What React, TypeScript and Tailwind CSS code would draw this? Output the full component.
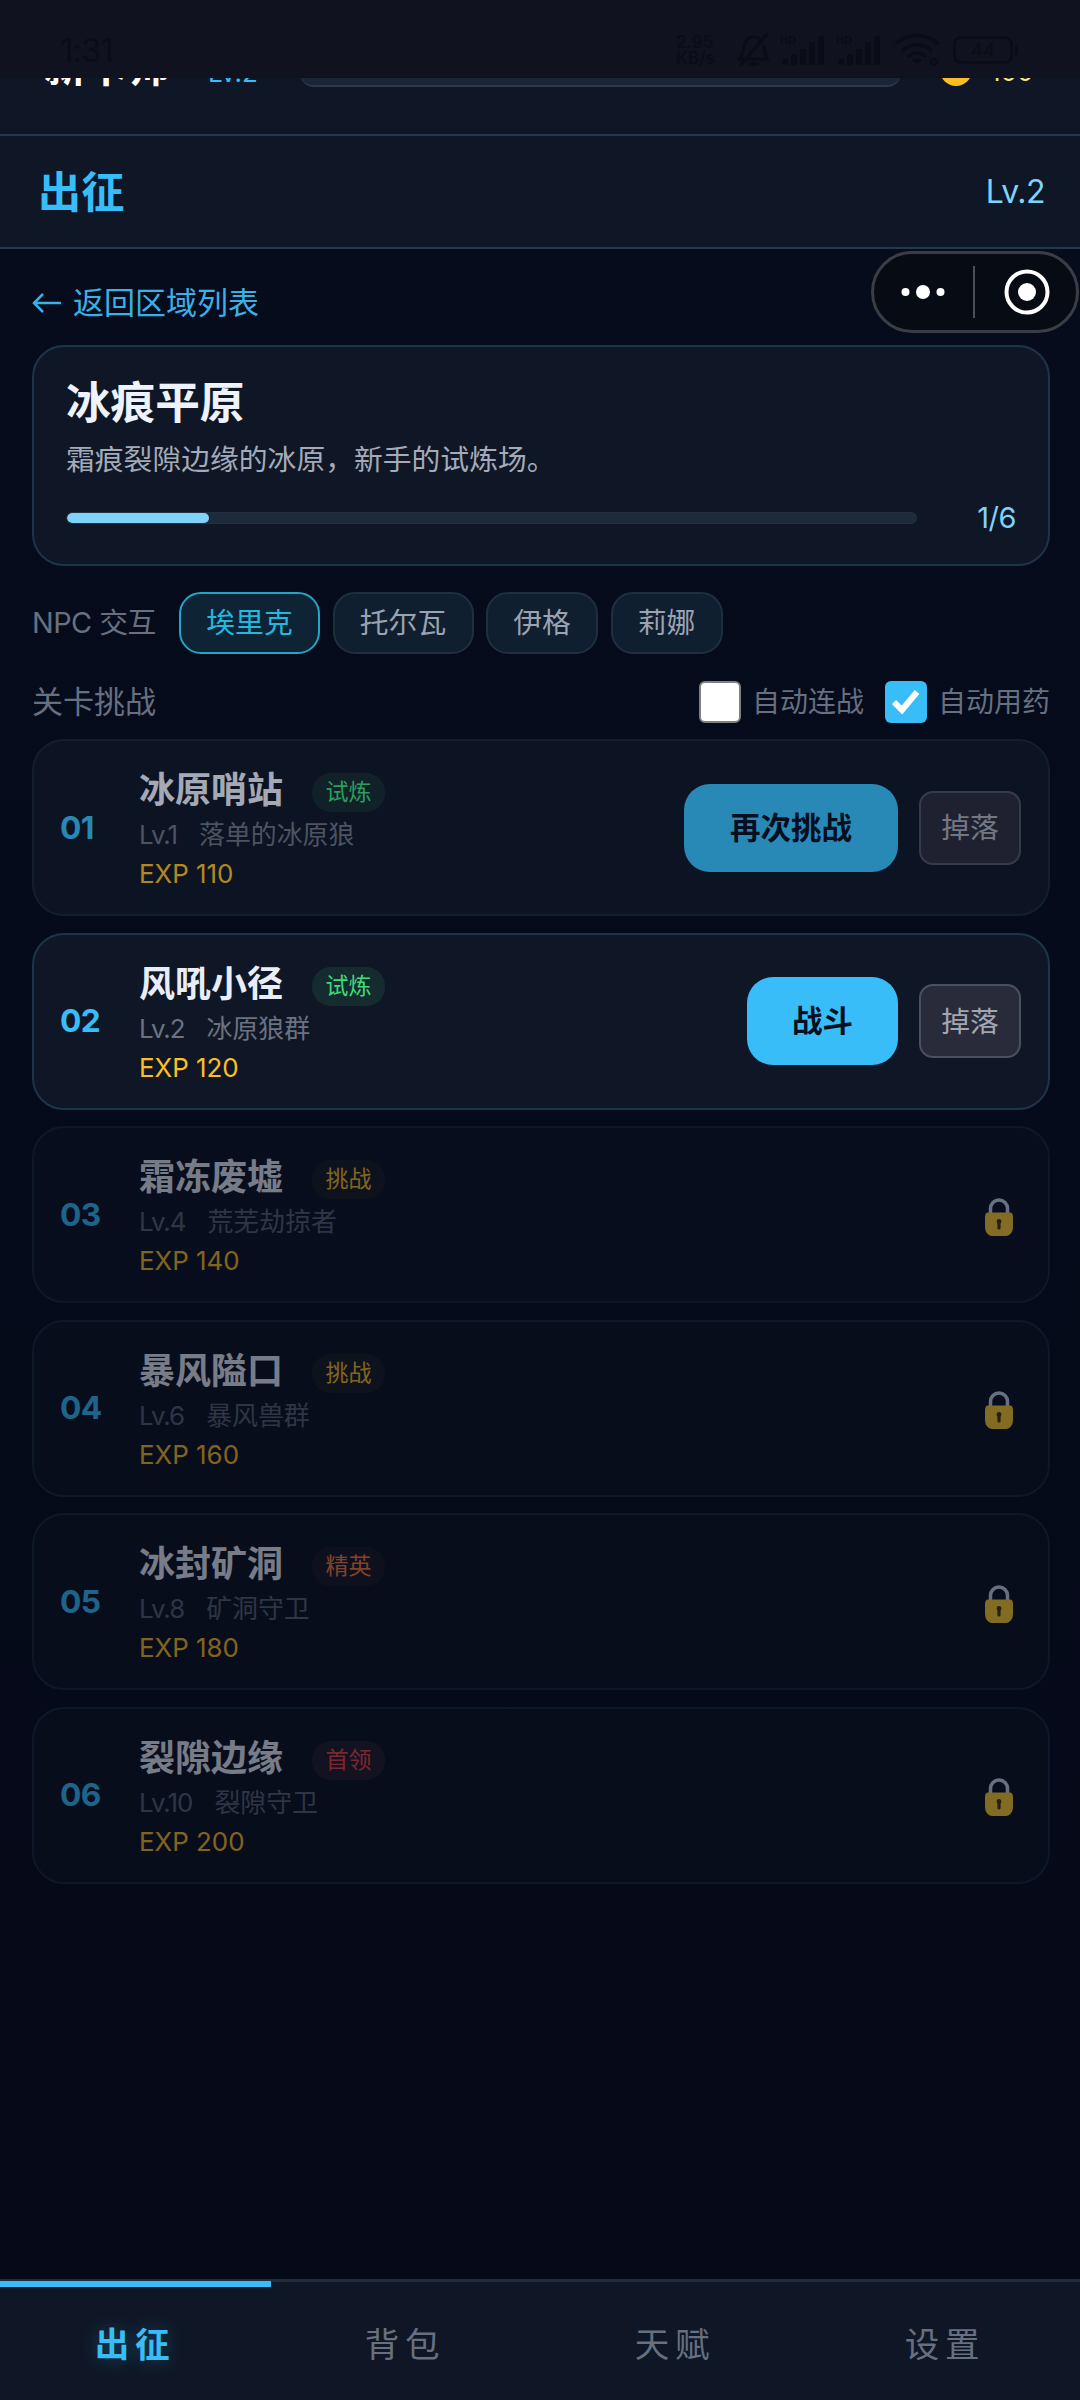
import React from "react";

function Signal() {
  return (
    <div className="relative w-[48px] h-[32px]">
      <span className="absolute left-0 top-0 text-[11px] leading-[12px] font-bold text-[#0a0c17]">HD</span>
      <svg width="48" height="32" viewBox="0 0 48 32" className="block">
        <rect x="2" y="25" width="6" height="6" rx="1" fill="#0a0c17" />
        <rect x="11" y="20" width="6" height="11" rx="1" fill="#0a0c17" />
        <rect x="20" y="15" width="6" height="16" rx="1" fill="#0a0c17" />
        <rect x="29" y="8" width="6" height="23" rx="1" fill="#0a0c17" />
        <rect x="38" y="2" width="6" height="29" rx="1" fill="#0a0c17" />
      </svg>
    </div>
  );
}

function StatusBar() {
  return (
    <div className="relative z-10 h-[78px] shrink-0 bg-[#10121f] flex items-center pt-[22px] pl-[60px] pr-[62px] justify-between text-[#0a0c17]">
      <span className="text-[33px] leading-[40px] tracking-[-1px]">1:31</span>
      <div className="flex items-center">
        <div className="w-[52px] text-[17px] leading-[16px] font-semibold">
          <div>2.95</div>
          <div>KB/s</div>
        </div>
        <svg width="34" height="36" viewBox="0 0 34 36" className="ml-[8px]" fill="none" stroke="#0a0c17" strokeWidth="3" strokeLinecap="round" strokeLinejoin="round">
          <path d="M3 27c4-3 4-7 5-13 1-6 5-9 10-9 4 0 7 2 8 5" />
          <path d="M28 14c0 6 1 10 4 13H3" />
          <path d="M14 32h7" strokeWidth="4" />
          <path d="M5 33 31 2" />
        </svg>
        <div className="ml-[10px]"><Signal /></div>
        <div className="ml-[8px]"><Signal /></div>
        <svg width="44" height="34" viewBox="0 0 44 34" className="ml-[11px]" fill="none" stroke="#0a0c17" strokeWidth="3.5" strokeLinecap="round">
          <path d="M2 10C13 0 31 0 42 10" />
          <path d="M8 17c8-7 20-7 28 0" />
          <path d="M14 23c5-4 11-4 16 0" />
          <path d="M22 31l-5-4c3-2 7-2 10 0z" fill="#0a0c17" stroke="none" />
          <circle cx="39" cy="29" r="3" strokeWidth="2.5" />
        </svg>
        <div className="ml-[14px] w-[60px] h-[28px] rounded-[8px] border-[3px] border-[#0a0c17] flex items-center justify-center text-[19px] leading-none">44</div>
        <div className="ml-[2px] w-[3px] h-[10px] rounded-r-[2px] bg-[#0a0c17]" />
      </div>
    </div>
  );
}

function ClippedHeader() {
  return (
    <div className="h-[56px] shrink-0 overflow-hidden bg-[#0f1726]">
      <div className="-mt-[50px] h-[56px] flex items-end pl-[44px] pr-[44px]">
        <span className="w-[126px] shrink-0 text-[42px] leading-[56px] font-bold text-white -mb-[11px]">新卡师</span>
        <span className="w-[56px] shrink-0 ml-[38px] text-[26px] leading-[32px] text-[#38bdf8] -mb-[5px]">Lv.2</span>
        <div className="ml-[36px] w-[601px] h-[30px] shrink-0 rounded-b-[14px] bg-[#1a2535] border-b-2 border-[#2a3a4c] -mb-[3px]" />
        <div className="ml-[39px] w-[32px] h-[32px] shrink-0 rounded-full bg-[#fbbf24] -mb-[2px]" />
        <span className="ml-[18px] text-[26px] leading-[32px] text-[#fde68a] -mb-[4px]">100</span>
      </div>
    </div>
  );
}

function Lock() {
  return (
    <svg width="32" height="40" viewBox="0 0 32 40" className="block">
      <path d="M7.5 18V11.5a8.5 8.5 0 0 1 17 0V18" fill="none" stroke="#c4d8ea" strokeWidth="3.5" />
      <path d="M5 15.5h22c2 0 3 1.5 3 5v9c0 6-3 9-7 9.500H9c-4-.5-7-3.500-7-9.500v-9c0-3.500 1-5 3-5z" fill="#ffcc2e" />
      <rect x="14.4" y="23" width="3.2" height="9.500" rx="1.6" fill="#4a3606" />
      <circle cx="16" cy="24.500" r="2.400" fill="#4a3606" />
    </svg>
  );
}

type Stage = {
  no: string;
  name: string;
  tag: string;
  tagClass: string;
  lv: string;
  foe: string;
  exp: string;
  state: "done" | "open" | "locked";
};

const stages: Stage[] = [
  { no: "01", name: "冰原哨站", tag: "试炼", tagClass: "text-[#3ddc78] bg-[#4ade80]/10", lv: "Lv.1", foe: "落单的冰原狼", exp: "EXP 110", state: "done" },
  { no: "02", name: "风吼小径", tag: "试炼", tagClass: "text-[#3ddc78] bg-[#4ade80]/10", lv: "Lv.2", foe: "冰原狼群", exp: "EXP 120", state: "open" },
  { no: "03", name: "霜冻废墟", tag: "挑战", tagClass: "text-[#fbbf24] bg-[#fbbf24]/5", lv: "Lv.4", foe: "荒芜劫掠者", exp: "EXP 140", state: "locked" },
  { no: "04", name: "暴风隘口", tag: "挑战", tagClass: "text-[#fbbf24] bg-[#fbbf24]/5", lv: "Lv.6", foe: "暴风兽群", exp: "EXP 160", state: "locked" },
  { no: "05", name: "冰封矿洞", tag: "精英", tagClass: "text-[#fb7a3c] bg-[#f87171]/5", lv: "Lv.8", foe: "矿洞守卫", exp: "EXP 180", state: "locked" },
  { no: "06", name: "裂隙边缘", tag: "首领", tagClass: "text-[#ef4444] bg-[#f87171]/10", lv: "Lv.10", foe: "裂隙守卫", exp: "EXP 200", state: "locked" },
];

function StageCard({ s }: { s: Stage }) {
  const locked = s.state === "locked";
  const op = s.state === "done" ? "opacity-70" : locked ? "opacity-50" : "";
  const border = locked ? "border-[#15263a]" : s.state === "done" ? "border-[#172838]" : "border-[#1c3548]";
  const bg = locked ? "bg-[#0b1120]" : "bg-[#0f1726]";
  return (
    <div className={`h-[177px] rounded-[32px] border-2 ${border} ${bg} flex items-center pl-[26px] pr-[27px] ${op}`}>
      <div className="w-[79px] shrink-0 text-[31.68px] leading-[40px] tracking-[-0.5px] font-bold text-[#38bdf8]">{s.no}</div>
      <div className="flex-1 min-w-0 flex flex-col pt-[6px]">
        <div className="flex items-center h-[40px]">
          <span className="text-[36px] leading-[40px] font-bold text-[#e8edf7]">{s.name}</span>
          <span className={`mt-[5px] ml-[29px] w-[73px] h-[39px] rounded-[19px] flex items-center justify-center text-[23px] leading-none ${s.tagClass}`}>{s.tag}</span>
        </div>
        <div className={`mt-[8px] flex items-center h-[34px] text-[25.9px] leading-[34px] ${locked ? "text-[#596070]" : "text-[#6b7280]"}`}>
          <span className="tracking-[-1px]">{s.lv}</span>
          <span className="ml-[22px]">{s.foe}</span>
        </div>
        <div className="mt-[5px] h-[34px] text-[25.9px] leading-[34px] text-[#fbbf24]">{s.exp}</div>
      </div>
      {locked ? (
        <div className="w-[32px] mr-[6px] mt-[4px] shrink-0"><Lock /></div>
      ) : (
        <div className="flex items-center shrink-0 gap-[21px]">
          <div className={`h-[88px] rounded-[26px] bg-[#38bdf8] flex items-center justify-center text-[30.5px] font-bold text-[#061021] ${s.state === "done" ? "w-[214px]" : "w-[151px]"}`}>
            {s.state === "done" ? "再次挑战" : "战斗"}
          </div>
          <div className="w-[102px] h-[74px] rounded-[14px] border-2 border-[#4b4f5e] bg-[#2a2b3a] flex items-center justify-center text-[28.8px] text-[#a2a6b0]">掉落</div>
        </div>
      )}
    </div>
  );
}

function Chip({ label, active, w }: { label: string; active?: boolean; w: string }) {
  return (
    <div className={`${w} h-[62px] rounded-[22px] border-2 flex items-center justify-center text-[28.8px] ${active ? "border-[#22a5c9] bg-[#0e2435] text-[#22b8e0]" : "border-[#1e3040] bg-[#0f1f2f] text-[#9aa3b2]"}`}>
      {label}
    </div>
  );
}

function Check({ on }: { on?: boolean }) {
  return on ? (
    <div className="w-[42px] h-[42px] rounded-[6px] bg-[#38bdf8] flex items-center justify-center">
      <svg width="32" height="32" viewBox="0 0 32 32" fill="none" stroke="#fff" strokeWidth="6">
        <path d="M4 16l8 8L27 6" />
      </svg>
    </div>
  ) : (
    <div className="w-[42px] h-[42px] rounded-[6px] bg-white border-2 border-[#808080]" />
  );
}

export default function App() {
  return (
    <div
      className="relative w-[1080px] h-[2400px] overflow-hidden flex flex-col bg-[#050a18]"
      style={{ fontFamily: '"Inter","Noto Sans CJK SC",sans-serif' }}
    >
      <StatusBar />
      <ClippedHeader />
      <div className="h-[115px] shrink-0 border-y-2 border-[#1e3a4c] bg-[#0f1726] flex items-center justify-between pl-[38px] pr-[35px]">
        <span className="text-[43.2px] leading-[50px] font-bold text-[#38bdf8]">出征</span>
        <span className="text-[32px] leading-[40px] tracking-[-0.5px] text-[#7dd3fc]">Lv.2</span>
      </div>

      <div className="absolute left-[871px] top-[251px] w-[208px] h-[82px] rounded-[41px] border-[3px] border-[#3a3d46] bg-[#070b14] flex items-center">
        <svg width="44" height="16" viewBox="0 0 44 16" className="ml-[27px]" fill="#fff">
          <circle cx="4.500" cy="8" r="4" />
          <circle cx="22" cy="8" r="7" />
          <circle cx="39.500" cy="8" r="4" />
        </svg>
        <div className="ml-[28px] w-[2px] h-[52px] bg-[#4b4e57]" />
        <svg width="46" height="46" viewBox="0 0 46 46" className="ml-[29px]">
          <circle cx="23" cy="23" r="20.500" fill="none" stroke="#fff" strokeWidth="4" />
          <circle cx="23" cy="23" r="9" fill="#fff" />
        </svg>
      </div>

      <main className="flex-1 min-h-0 pl-[32px] pr-[30px] pt-[34px] bg-gradient-to-b from-[#060c1c] to-[#050918]">
        <div className="h-[40px] flex items-center text-[31px] leading-[40px] text-[#3ab0e6]">
          <svg width="30" height="24" viewBox="0 0 30 24" fill="none" stroke="#3ab0e6" strokeWidth="2.500" className="mr-[11px]">
            <path d="M29 12H2M11 3l-9 9 9 9" />
          </svg>
          返回区域列表
        </div>

        <section className="mt-[22px] h-[221px] rounded-[32px] border-2 border-[#1c3548] bg-[#0f1726] pl-[32px] pr-[32px] pt-[31px]">
          <h1 className="text-[44.6px] leading-[50px] font-bold text-[#eef2fa]">冰痕平原</h1>
          <p className="mt-[12px] text-[28.8px] leading-[40px] text-[#a3abb9]">霜痕裂隙边缘的冰原，新手的试炼场。</p>
          <div className="mt-[23px] flex items-center h-[30px]">
            <div className="w-[851px] h-[12px] rounded-full bg-[#1c2a3c] border border-[#22303f] overflow-hidden">
              <div className="h-full w-[142px] rounded-full bg-[#7dd3fc]" />
            </div>
            <span className="ml-auto text-[29px] leading-[30px] tracking-[-0.5px] text-[#7dd3fc]">1/6</span>
          </div>
        </section>

        <div className="mt-[26px] flex items-center h-[62px]">
          <span className="w-[147px] text-[28.8px] tracking-[-0.5px] text-[#667080]">NPC 交互</span>
          <div className="flex gap-[12.5px]">
            <Chip label="埃里克" active w="w-[141px]" />
            <Chip label="托尔瓦" w="w-[141px]" />
            <Chip label="伊格" w="w-[112px]" />
            <Chip label="莉娜" w="w-[112px]" />
          </div>
        </div>

        <div className="mt-[27px] flex items-center justify-between h-[42px]">
          <span className="text-[31px] text-[#667080]">关卡挑战</span>
          <div className="flex items-center">
            <Check />
            <span className="ml-[11px] text-[28px] text-[#667080]">自动连战</span>
            <div className="ml-[21px]"><Check on /></div>
            <span className="ml-[11px] text-[28px] text-[#667080]">自动用药</span>
          </div>
        </div>

        <div className="mt-[16px] flex flex-col gap-[16.6px]">
          {stages.map((s) => (
            <StageCard key={s.no} s={s} />
          ))}
        </div>
      </main>

      <nav className="relative h-[121px] shrink-0 border-t-[3px] border-[#1e2d40] bg-[#0f1726] grid grid-cols-4">
        <div className="absolute left-0 -top-[1px] w-[271px] h-[6px] bg-[#38bdf8]" />
        {["出征", "背包", "天赋", "设置"].map((t, i) => (
          <div
            key={t}
            className={`flex items-center justify-center pt-[8px] text-[34.56px] tracking-[5.76px] ${i === 0 ? "font-bold text-[#38bdf8] [text-shadow:0_0_18px_rgba(56,189,248,0.3)]" : "text-[#667080]"}`}
          >
            {t}
          </div>
        ))}
      </nav>
    </div>
  );
}
